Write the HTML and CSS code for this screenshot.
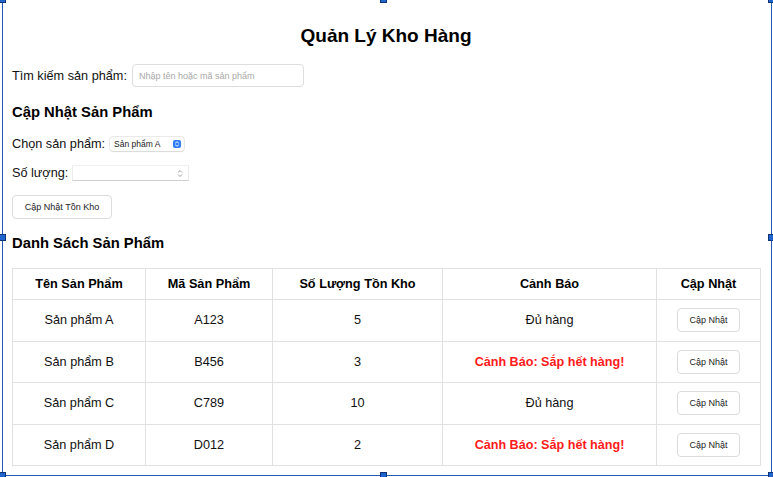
FILE: index.html
```html
<!DOCTYPE html>
<html lang="vi">
<head>
<meta charset="utf-8">
<title>Quản Lý Kho Hàng</title>
<link rel="stylesheet" href="styles.css">
</head>
<body>
<div class="page">
  <h1 class="title">Quản Lý Kho Hàng</h1>

  <div class="row search-row">
    <label class="label" for="search">Tìm kiếm sản phẩm:</label>
    <input id="search" class="search-input" type="text" placeholder="Nhập tên hoặc mã sản phẩm">
  </div>

  <h2 class="section-title">Cập Nhật Sản Phẩm</h2>

  <div class="row select-row">
    <label class="label" for="product">Chọn sản phẩm:</label>
    <div class="select-box">
      <select id="product" class="select">
        <option>Sản phẩm A</option>
        <option>Sản phẩm B</option>
        <option>Sản phẩm C</option>
        <option>Sản phẩm D</option>
      </select>
      <svg class="select-icon" width="8" height="8" viewBox="0 0 8 8" aria-hidden="true">
        <rect x="0" y="0" width="8" height="8" rx="2" fill="#2f7cf6"/>
        <path d="M2.4 3.1 L4 1.7 L5.6 3.1 M2.4 4.9 L4 6.3 L5.6 4.9" fill="none" stroke="#fff" stroke-width="0.9" stroke-linecap="round" stroke-linejoin="round"/>
      </svg>
    </div>
  </div>

  <div class="row qty-row">
    <label class="label" for="qty">Số lượng:</label>
    <div class="number-box">
      <input id="qty" class="number-input" type="text">
      <svg class="spinner" width="6" height="9" viewBox="0 0 6 9" aria-hidden="true">
        <path d="M1.2 3.3 L3 1.5 L4.8 3.3 M1.2 5.7 L3 7.5 L4.8 5.7" fill="none" stroke="#8a8a8a" stroke-width="0.8" stroke-linecap="round" stroke-linejoin="round"/>
      </svg>
    </div>
  </div>

  <button class="btn btn-main" type="button">Cập Nhật Tồn Kho</button>

  <h2 class="section-title list-title">Danh Sách Sản Phẩm</h2>

  <table class="table">
    <thead>
      <tr>
        <th class="c1">Tên Sản Phẩm</th>
        <th class="c2">Mã Sản Phẩm</th>
        <th class="c3">Số Lượng Tồn Kho</th>
        <th class="c4">Cảnh Báo</th>
        <th class="c5">Cập Nhật</th>
      </tr>
    </thead>
    <tbody>
      <tr>
        <td>Sản phẩm A</td><td>A123</td><td>5</td><td>Đủ hàng</td>
        <td><button class="btn btn-small" type="button">Cập Nhật</button></td>
      </tr>
      <tr>
        <td>Sản phẩm B</td><td>B456</td><td>3</td><td class="warn">Cảnh Báo: Sắp hết hàng!</td>
        <td><button class="btn btn-small" type="button">Cập Nhật</button></td>
      </tr>
      <tr>
        <td>Sản phẩm C</td><td>C789</td><td>10</td><td>Đủ hàng</td>
        <td><button class="btn btn-small" type="button">Cập Nhật</button></td>
      </tr>
      <tr>
        <td>Sản phẩm D</td><td>D012</td><td>2</td><td class="warn">Cảnh Báo: Sắp hết hàng!</td>
        <td><button class="btn btn-small" type="button">Cập Nhật</button></td>
      </tr>
    </tbody>
  </table>
</div>

<div class="frame" aria-hidden="true">
  <span class="handle h-tl"></span>
  <span class="handle h-tm"></span>
  <span class="handle h-tr"></span>
  <span class="handle h-ml"></span>
  <span class="handle h-mr"></span>
  <span class="handle h-bl"></span>
  <span class="handle h-bm"></span>
  <span class="handle h-br"></span>
</div>
</body>
</html>
```

FILE: styles.css
```css
* { box-sizing: border-box; }

html, body {
  margin: 0;
  padding: 0;
  background: #fff;
}

body {
  width: 773px;
  height: 477px;
  overflow: hidden;
  position: relative;
  font-family: "Liberation Sans", Arial, sans-serif;
  color: #111;
}

.page {
  padding: 0 13px 0 12px;
}

.title {
  margin: 25px 0 0;
  font-size: 19px;
  line-height: 22px;
  font-weight: bold;
  text-align: center;
  color: #000;
}

.row {
  display: flex;
  align-items: center;
}

.label {
  font-size: 12.7px;
  color: #111;
}

.search-row {
  margin-top: 17px;
  height: 23px;
}

.search-input {
  margin-left: 5px;
  width: 172px;
  height: 23px;
  border: 1px solid #dedede;
  border-radius: 4px;
  padding: 0 6px;
  font-family: "Liberation Sans", Arial, sans-serif;
  font-size: 9px;
  outline: none;
}

.search-input::placeholder {
  color: #a8a8a8;
}

.section-title {
  margin: 16px 0 0;
  font-size: 14.8px;
  line-height: 18px;
  font-weight: bold;
  color: #000;
}

.select-row {
  margin-top: 16px;
  height: 14px;
}

.select-box {
  margin-left: 5px;
  width: 74px;
  height: 14px;
  display: flex;
  align-items: center;
  background: #fff;
  border-radius: 3px;
  box-shadow: 0 0 0 0.5px #d4d4d4, 0 1px 1px rgba(0,0,0,0.12);
  padding: 0 3px 0 4px;
}

.select {
  -webkit-appearance: none;
  appearance: none;
  border: none;
  background: transparent;
  flex: 1;
  min-width: 0;
  padding: 0;
  font-family: "Liberation Sans", Arial, sans-serif;
  font-size: 8.5px;
  color: #222;
  outline: none;
}

.select-icon {
  flex: none;
}

.qty-row {
  margin-top: 14px;
  height: 16px;
}

.number-box {
  margin-left: 4px;
  width: 117px;
  height: 16px;
  display: flex;
  align-items: center;
  border-top: 1px solid #f0f0f0;
  border-left: 1px solid #ececec;
  border-right: 1px solid #ececec;
  border-bottom: 1px solid #cfcfcf;
  padding-right: 5px;
}

.number-input {
  flex: 1;
  min-width: 0;
  border: none;
  height: 100%;
  outline: none;
  background: transparent;
  font-size: 10px;
}

.spinner { flex: none; }

.btn {
  background: #fff;
  border: 1px solid #dcdcdc;
  border-radius: 4px;
  font-family: "Liberation Sans", Arial, sans-serif;
  color: #222;
  padding: 0;
  cursor: pointer;
}

.btn-main {
  display: block;
  margin-top: 14px;
  width: 100px;
  height: 24px;
  font-size: 9px;
}

.list-title {
  margin-top: 15px;
}

.table {
  margin-top: 16px;
  width: 748px;
  border-collapse: collapse;
  table-layout: fixed;
  font-size: 12.7px;
  color: #111;
}

.table th,
.table td {
  border: 1px solid #e1e1e1;
  text-align: center;
  vertical-align: middle;
  padding: 0;
}

.table th {
  height: 31px;
  font-weight: bold;
  color: #000;
}

.table td {
  height: 41.5px;
}

.c1 { width: 133px; }
.c2 { width: 127px; }
.c3 { width: 170px; }
.c4 { width: 214px; }
.c5 { width: 104px; }

.warn {
  color: #ff1a1a;
  font-weight: bold;
  font-size: 12.6px;
}

.btn-small {
  width: 63px;
  height: 24px;
  font-size: 9px;
  vertical-align: middle;
}

/* selection frame overlay */
.frame {
  position: absolute;
  left: 2px;
  top: -1px;
  width: 770px;
  height: 477px;
  border: 1.5px solid #2659b3;
  pointer-events: none;
}

.handle {
  position: absolute;
  width: 7px;
  height: 7px;
  background: #1f63cc;
  border: 1px solid #0e3475;
}

.h-tl { left: -4px; top: -4px; }
.h-tm { left: 377px; top: -4px; }
.h-tr { right: -4px; top: -4px; }
.h-ml { left: -4px; top: 234px; }
.h-mr { right: -4px; top: 234px; }
.h-bl { left: -4px; bottom: -4px; }
.h-bm { left: 377px; bottom: -4px; }
.h-br { right: -4px; bottom: -4px; }
```
